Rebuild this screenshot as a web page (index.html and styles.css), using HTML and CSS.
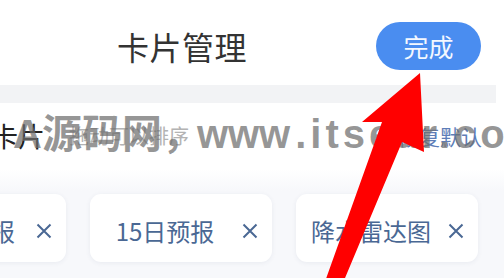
FILE: index.html
```html
<!DOCTYPE html>
<html lang="zh">
<head>
<meta charset="utf-8">
<link rel="stylesheet" href="styles.css">
</head>
<body>
<div class="page">
  <header class="topbar">
    <h1 class="title">卡片管理</h1>
    <button class="done">完成</button>
  </header>
  <div class="band"></div>
  <div class="row">
    <span class="row-title">卡片</span>
    <span class="row-hint">拖动可以排序</span>
    <span class="row-reset">恢复默认</span>
  </div>
  <div class="chips">
    <div class="chip chip-first"><span class="chip-text">预报</span><svg class="chip-x" width="16" height="16" viewBox="0 0 16 16"><path d="M1.5 1.5 L14.5 14.5 M14.5 1.5 L1.5 14.5" stroke="#4a6894" stroke-width="2" fill="none"/></svg></div>
    <div class="chip"><span class="chip-text">15日预报</span><svg class="chip-x" width="16" height="16" viewBox="0 0 16 16"><path d="M1.5 1.5 L14.5 14.5 M14.5 1.5 L1.5 14.5" stroke="#4a6894" stroke-width="2" fill="none"/></svg></div>
    <div class="chip"><span class="chip-text">降水雷达图</span><svg class="chip-x" width="16" height="16" viewBox="0 0 16 16"><path d="M1.5 1.5 L14.5 14.5 M14.5 1.5 L1.5 14.5" stroke="#4a6894" stroke-width="2" fill="none"/></svg></div>
  </div>
  <div class="watermark"><span class="wm-cn">A源码网，</span><span class="wm-www">www</span><span class="wm-rest">.itsear.com</span></div>
  <svg class="arrow" width="504" height="278" viewBox="0 0 504 278">
    <polygon points="420,73 362,122 382,122 322,290 340,290 402,142 424,152" fill="#ff0000"/>
  </svg>
</div>
</body>
</html>
```
FILE: styles.css
```css
* { box-sizing: border-box; margin: 0; padding: 0; }
html, body { width: 504px; height: 278px; overflow: hidden; background: #ffffff; }
body { font-family: "Noto Sans CJK SC", "Noto Sans", sans-serif; }
.page { position: relative; width: 504px; height: 278px; overflow: hidden; background: #ffffff; }

.topbar { height: 85px; display: flex; align-items: center; padding-left: 117px; padding-right: 23px; padding-top: 6px; }
.title { font-size: 32px; font-weight: 400; color: #333333; line-height: 40px; letter-spacing: 0.5px; }
.done { margin-left: auto; width: 105px; height: 48px; border: none; border-radius: 24px; background: #4a8df0; color: #f4f8ff; font-family: "Noto Sans CJK SC", sans-serif; font-size: 25px; line-height: 48px; padding-top: 0; }

.band { width: 496px; height: 18px; background: #f2f3f5; }

.row { height: 66px; display: flex; align-items: center; margin-left: -9px; padding-right: 22px; }
.row-title { font-size: 27px; color: #222222; line-height: 34px; }
.row-hint { font-size: 20px; color: #b3b3b3; line-height: 28px; margin-left: 24px; }
.row-reset { margin-left: auto; font-size: 21px; color: #5d7db8; line-height: 28px; }

.chips { height: 109px; background: linear-gradient(#ffffff, #f7f8fb 20%, #f7f8fb); display: flex; gap: 24px; padding-top: 25px; margin-left: -116px; }
.chip { flex: none; width: 182px; height: 68px; background: #ffffff; border-radius: 11px; box-shadow: 0 1px 5px rgba(40, 60, 100, 0.07); display: flex; align-items: center; padding-right: 14px; padding-top: 6px; }
.chip-text { width: 150px; text-align: center; font-size: 24px; color: #4a6894; line-height: 30px; }
.chip-first .chip-text { text-align: right; padding-right: 19px; }
.chip-x { margin-left: 2px; flex: none; }

.watermark { position: absolute; left: 13px; top: 114px; display: flex; font-family: "Liberation Sans", "Noto Sans CJK SC", sans-serif; font-weight: 700; font-size: 40px; line-height: 40px; color: rgba(110, 110, 110, 0.72); white-space: nowrap; }
.wm-www { margin-left: -5px; }
.wm-rest { margin-left: 5px; letter-spacing: 4px; }
.arrow { position: absolute; left: 0; top: 0; }
```
